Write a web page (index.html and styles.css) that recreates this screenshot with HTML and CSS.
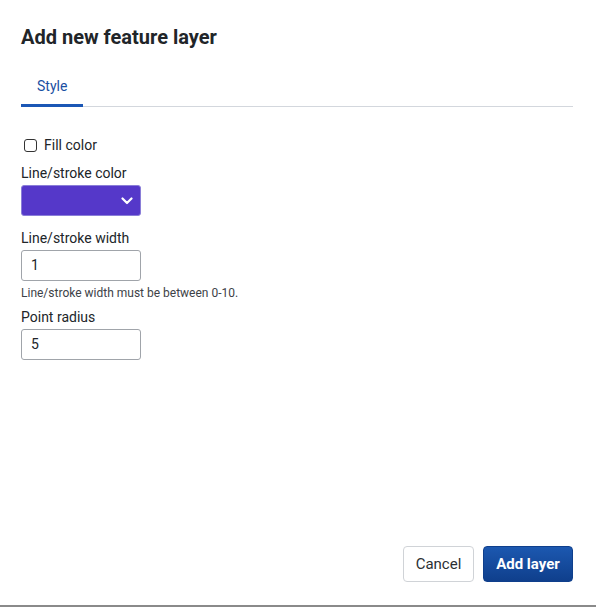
FILE: index.html
```html
<!DOCTYPE html>
<html lang="en">
<head>
<meta charset="utf-8">
<title>Add new feature layer</title>
<link rel="stylesheet" href="styles.css">
</head>
<body>
<div class="dialog">
  <h1 class="title">Add new feature layer</h1>
  <div class="tabs">
    <div class="tab active">Style</div>
  </div>
  <div class="form">
    <label class="check-row"><span class="checkbox"></span><span>Fill color</span></label>
    <div class="field">
      <div class="label">Line/stroke color</div>
      <div class="color-select">
        <svg class="chevron" width="12" height="8" viewBox="0 0 12 8"><path d="M1.5 1.5 L6 6 L10.5 1.5" fill="none" stroke="#fff" stroke-width="2.2" stroke-linecap="round" stroke-linejoin="round"/></svg>
      </div>
    </div>
    <div class="field">
      <div class="label">Line/stroke width</div>
      <div class="input">1</div>
      <div class="help">Line/stroke width must be between 0-10.</div>
    </div>
    <div class="field tight">
      <div class="label">Point radius</div>
      <div class="input">5</div>
    </div>
  </div>
  <div class="footer">
    <button class="btn btn-secondary">Cancel</button>
    <button class="btn btn-primary">Add layer</button>
  </div>
</div>
<div class="edge"></div>
</body>
</html>
```
FILE: styles.css
```css
html, body {
  margin: 0;
  padding: 0;
  background: #fff;
}
body {
  font-family: Roboto, "Liberation Sans", Arial, sans-serif;
  color: #212529;
  width: 596px;
  height: 607px;
  overflow: hidden;
}
.dialog {
  box-sizing: border-box;
  height: 605px;
  padding: 25px 23px 23px 21px;
  display: flex;
  flex-direction: column;
}
.title {
  margin: 0;
  font-size: 20px;
  line-height: 24px;
  font-weight: 700;
  color: #212529;
}
.tabs {
  margin-top: 27px;
  display: flex;
  border-bottom: 1px solid #d3d7dd;
}
.tab {
  font-size: 14px;
  line-height: 20px;
  padding: 0 16px 8px;
  color: #1a4fa3;
  border-bottom: 3px solid #1b57b5;
  margin-bottom: -1px;
}
.form {
  display: flex;
  flex-direction: column;
  padding-top: 28px;
}
.check-row {
  display: flex;
  align-items: center;
  gap: 7px;
  font-size: 14px;
  line-height: 20px;
  padding-left: 3px;
}
.checkbox {
  box-sizing: border-box;
  width: 13px;
  height: 13px;
  border: 1px solid #333;
  border-radius: 3px;
  background: #fff;
}
.field {
  margin-top: 8px;
  display: flex;
  flex-direction: column;
  align-items: flex-start;
}
.field + .field {
  margin-top: 12px;
}
.field.tight {
  margin-top: 7px;
}
.label {
  font-size: 14px;
  line-height: 20px;
  margin-bottom: 2px;
  color: #212529;
}
.color-select {
  box-sizing: border-box;
  width: 120px;
  height: 31px;
  background: #5538c9;
  border: 1px solid #8a7ed8;
  border-radius: 3px;
  display: flex;
  align-items: center;
  justify-content: flex-end;
  padding-right: 7px;
}
.input {
  box-sizing: border-box;
  width: 120px;
  height: 31px;
  border: 1px solid #a0a4aa;
  border-radius: 3px;
  font-size: 14px;
  line-height: 29px;
  padding-left: 9px;
  color: #212529;
}
.help {
  font-size: 12px;
  line-height: 14px;
  margin-top: 5px;
  color: #3d4247;
}
.footer {
  margin-top: auto;
  display: flex;
  justify-content: flex-end;
  gap: 9px;
}
.btn {
  box-sizing: border-box;
  height: 36px;
  border-radius: 4px;
  font-family: Roboto, "Liberation Sans", Arial, sans-serif;
  font-size: 15px;
  padding: 0;
  white-space: nowrap;
}
.btn-secondary {
  width: 71px;
  background: #fff;
  border: 1px solid #d0d3d7;
  color: #2b2f33;
}
.btn-primary {
  width: 90px;
  background: linear-gradient(#1c58b0, #0f3f8c);
  border: 1px solid #0f3f8c;
  color: #fff;
  font-weight: 700;
}
.edge {
  height: 2px;
  background: #8a8a8a;
}
```
